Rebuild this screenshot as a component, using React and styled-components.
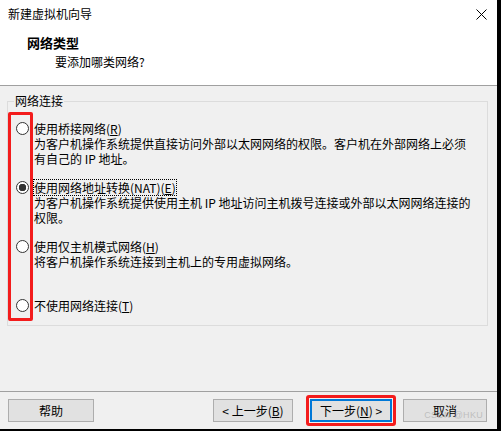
import React from 'react';
import styled, { createGlobalStyle } from 'styled-components';

const GlobalStyle = createGlobalStyle`
  html, body {
    margin: 0;
    padding: 0;
    background: #f0f0f0;
  }
  body {
    font-family: "Noto Sans CJK SC", "Microsoft YaHei", sans-serif;
    font-size: 12px;
    color: #000;
  }
`;

const Window = styled.div`
  position: relative;
  width: 497px;
  height: 429px;
  border-right: 4px solid #000;
  border-bottom: 2px solid #000;
  background: #f0f0f0;
  display: flex;
  flex-direction: column;
`;

const Header = styled.div`
  box-sizing: border-box;
  height: 86px;
  background: #fff;
  border-bottom: 1px solid #a0a0a0;
  padding: 7px 10px 0 8px;
`;

const TitleBar = styled.div`
  display: flex;
  justify-content: space-between;
  align-items: center;
  height: 14px;
  line-height: 14px;
`;

const Heading = styled.div`
  margin-top: 14px;
  padding-left: 19px;
  font-size: 13px;
  font-weight: bold;
  line-height: 16px;
`;

const SubHeading = styled.div`
  margin-top: 4px;
  padding-left: 47px;
  line-height: 14px;
`;

const Body = styled.div`
  flex: 1;
  padding: 15px 9px 0 7px;
`;

const Group = styled.div`
  position: relative;
  box-sizing: border-box;
  height: 225px;
  border: 1px solid #dcdcdc;
  padding: 19px 0 0 8px;
`;

const Legend = styled.span`
  position: absolute;
  top: -8px;
  left: 6px;
  padding: 0 1px;
  line-height: 14px;
  background: #f0f0f0;
`;

const Highlight = styled.div`
  position: absolute;
  left: 0;
  top: 10px;
  width: 25px;
  height: 209px;
  box-sizing: border-box;
  border: 3px solid #f31c1c;
  border-radius: 2px;
`;

const Option = styled.div`
  display: grid;
  grid-template-columns: 13px auto;
  column-gap: 5px;
  min-height: 59px;
  align-content: start;
`;

const Radio = styled.span`
  box-sizing: border-box;
  width: 13px;
  height: 13px;
  margin-top: 1px;
  border-radius: 50%;
  border: 1px solid #333;
  background: ${p => (p.$checked ? 'radial-gradient(circle, #333 0 3.5px, #fff 4px)' : '#fff')};
`;

const Label = styled.span`
  justify-self: start;
  line-height: 15px;
  white-space: nowrap;
  outline: ${p => (p.$focused ? '1px dotted #000' : 'none')};
`;

const Desc = styled.div`
  grid-column: 2;
  line-height: 15px;
  white-space: nowrap;
`;

const Key = styled.u`
  text-underline-offset: 1px;
`;

const Footer = styled.div`
  box-sizing: border-box;
  height: 38px;
  border-top: 1px solid #a0a0a0;
  display: flex;
  align-items: center;
  padding: 0 10px 0 8px;
`;

const Button = styled.button`
  box-sizing: border-box;
  width: ${p => p.$w}px;
  height: 23px;
  padding: 0;
  background: #e1e1e1;
  border: ${p => (p.$default ? '2px solid #0078d7' : '1px solid #adadad')};
  border-radius: 0;
  font-family: inherit;
  font-size: 12px;
  color: #000;
  line-height: 14px;
`;

const Spacer = styled.div`
  flex: 1;
`;

const Marked = styled.span`
  display: flex;
  margin: 0 7px 0 13px;
  padding: 1px;
  border: 3px solid #f31c1c;
  border-radius: 3px;
`;

const Watermark = styled.span`
  position: absolute;
  right: 14px;
  bottom: 9px;
  font-family: "Liberation Sans", Arial, sans-serif;
  font-size: 9px;
  color: rgba(160, 160, 160, 0.55);
  letter-spacing: 0.3px;
`;

const options = [
  {
    label: '使用桥接网络',
    key: 'R',
    desc: ['为客户机操作系统提供直接访问外部以太网网络的权限。客户机在外部网络上必须', '有自己的 IP 地址。'],
  },
  {
    label: '使用网络地址转换(NAT)',
    key: 'E',
    desc: ['为客户机操作系统提供使用主机 IP 地址访问主机拨号连接或外部以太网网络连接的', '权限。'],
    checked: true,
  },
  {
    label: '使用仅主机模式网络',
    key: 'H',
    desc: [' 将客户机操作系统连接到主机上的专用虚拟网络。'],
  },
  { label: '不使用网络连接', key: 'T', desc: [] },
];

function CloseIcon() {
  return (
    <svg width="11" height="11" viewBox="0 0 11 11">
      <path d="M0.5 0.5 L10.5 10.5 M10.5 0.5 L0.5 10.5" stroke="#000" strokeWidth="1" />
    </svg>
  );
}

export default function App() {
  return (
    <>
      <GlobalStyle />
      <Window>
        <Header>
          <TitleBar>
            <span>新建虚拟机向导</span>
            <CloseIcon />
          </TitleBar>
          <Heading>网络类型</Heading>
          <SubHeading>要添加哪类网络?</SubHeading>
        </Header>

        <Body>
          <Group>
            <Legend>网络连接</Legend>
            {options.map(opt => (
              <Option key={opt.key}>
                <Radio $checked={opt.checked} />
                <Label $focused={opt.checked}>
                  {opt.label}(<Key>{opt.key}</Key>)
                </Label>
                {opt.desc.length > 0 && (
                  <Desc>
                    {opt.desc.map(line => (
                      <div key={line}>{line}</div>
                    ))}
                  </Desc>
                )}
              </Option>
            ))}
            <Highlight />
          </Group>
        </Body>

        <Footer>
          <Button $w={86}>帮助</Button>
          <Spacer />
          <Button $w={80}>&lt; 上一步(<Key>B</Key>)</Button>
          <Marked>
            <Button $w={82} $default>
              下一步(<Key>N</Key>) &gt;
            </Button>
          </Marked>
          <Button $w={84}>取消</Button>
        </Footer>
        <Watermark>CSDN @HKU</Watermark>
      </Window>
    </>
  );
}
